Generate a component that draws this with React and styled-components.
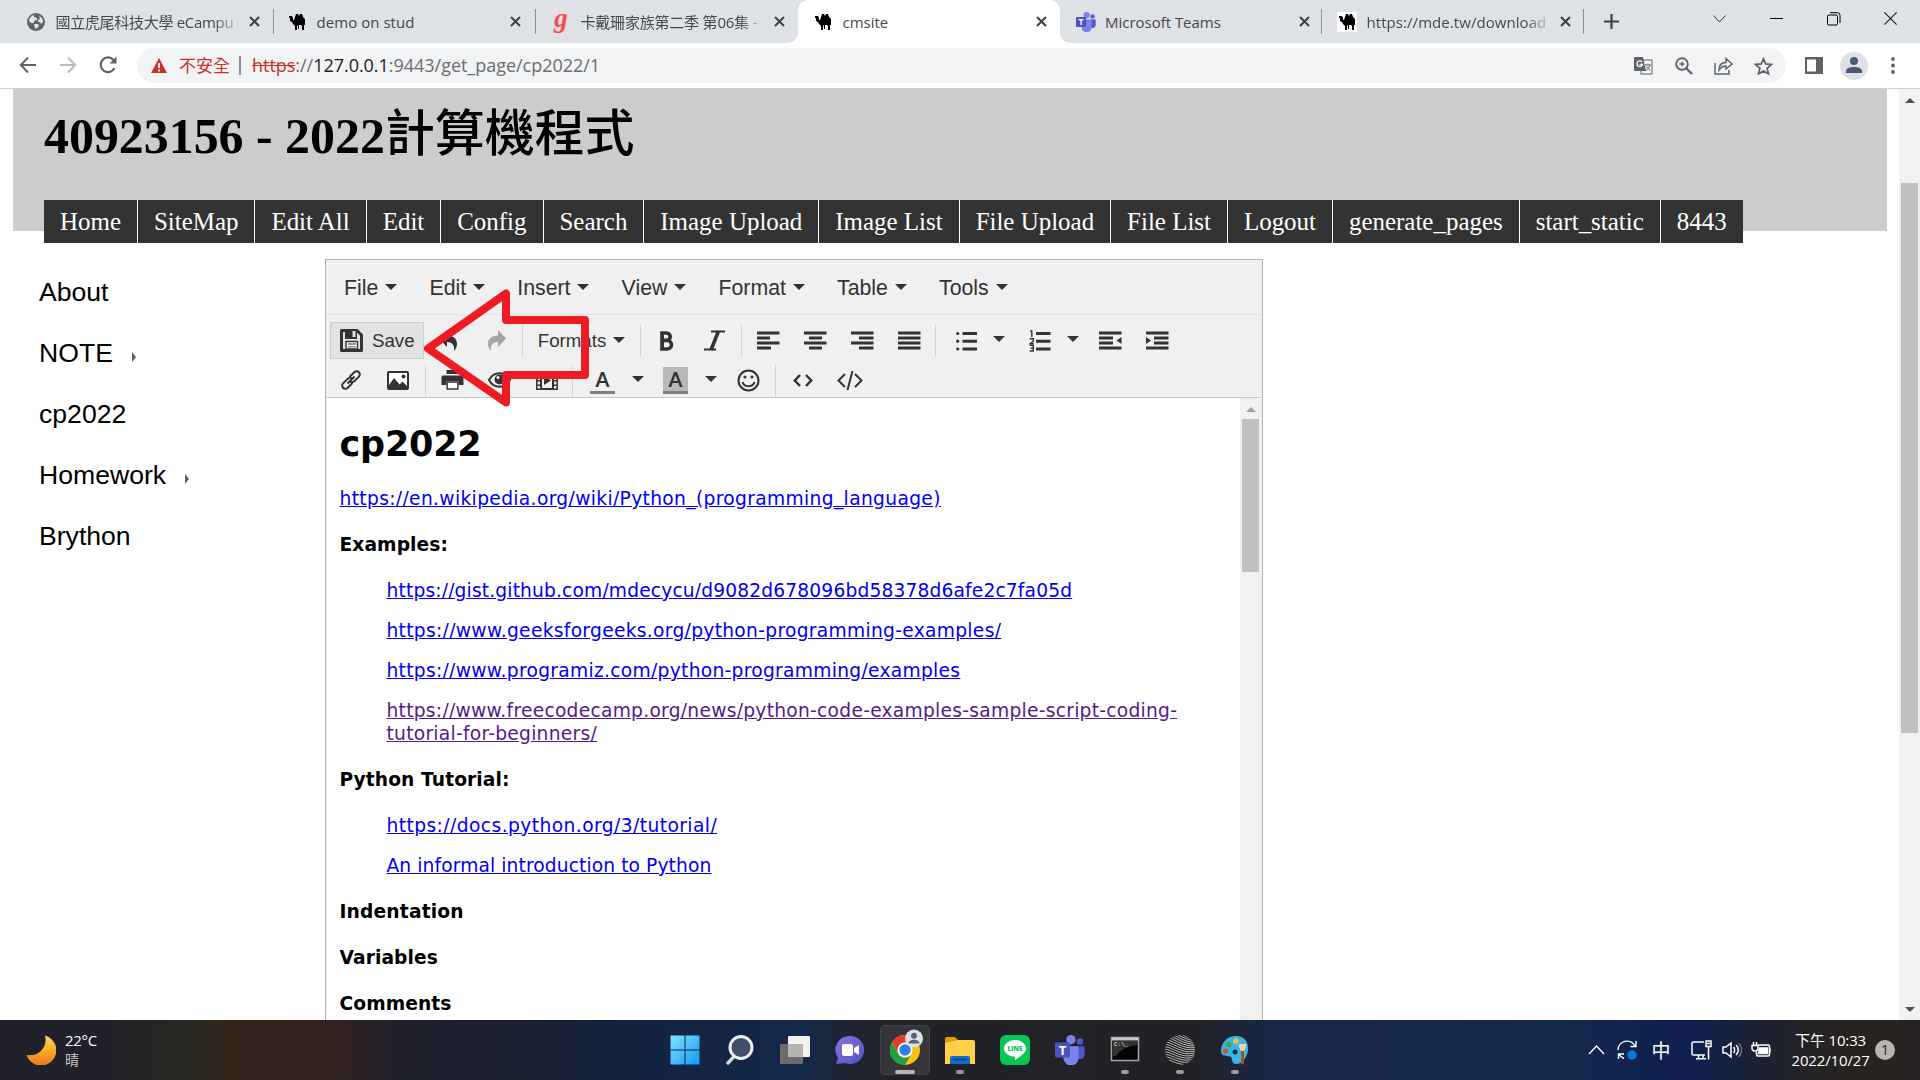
import React from "react";
import styled, { createGlobalStyle } from "styled-components";

const GlobalStyle = createGlobalStyle`
  * { box-sizing: border-box; }
  body { margin: 0; background: #fff; overflow: hidden; }
  svg { display: block; flex: none; }
`;

const UI = `"Open Sans", "Noto Sans", "Noto Sans CJK TC", sans-serif`;

const Desktop = styled.div`
  width: 1920px;
  height: 1080px;
  display: flex;
  flex-direction: column;
  position: relative;
  overflow: hidden;
  background: #fff;
`;

/* ---------- browser chrome ---------- */

const TabStrip = styled.div`
  height: 43px;
  flex: none;
  background: #dee1e6;
  display: flex;
`;

const Tab = styled.div`
  width: ${(p) => p.$width || 262}px;
  height: 43px;
  padding-left: ${(p) => p.$pad ?? 15}px;
  display: flex;
  align-items: center;
  position: relative;
  background: ${(p) => (p.$active ? "#fff" : "transparent")};
  border-radius: 10px 10px 0 0;
`;

const TabCorner = styled.span`
  position: absolute;
  bottom: 0;
  ${(p) => p.$side}: -10px;
  width: 10px;
  height: 10px;
  background: radial-gradient(
    circle at ${(p) => (p.$side === "left" ? "0 0" : "100% 0")},
    transparent 9.5px,
    #fff 10px
  );
`;

const Favicon = styled.span`
  width: 20px;
  height: 20px;
  display: flex;
  align-items: center;
  justify-content: center;
  background: ${(p) => (p.$plate ? "#fff" : "transparent")};
`;

const TabTitle = styled.span`
  width: 184px;
  margin-left: 9.5px;
  padding-top: 1px;
  font: 15px/22px ${UI};
  letter-spacing: ${(p) => p.$track || 0}px;
  color: #45484c;
  white-space: nowrap;
  mask-image: ${(p) => (p.$fade ? "linear-gradient(90deg,#000 158px,rgba(0,0,0,0.15) 182px)" : "none")};
`;

const TabClose = styled.span`
  width: 12px;
  margin-left: 9.5px;
`;

const TabRule = styled.span`
  width: 1px;
  height: 25px;
  margin-left: auto;
  background: #8d9095;
`;

const NewTab = styled.span`
  width: 55px;
  display: flex;
  align-items: center;
  justify-content: center;
`;

const WindowButtons = styled.div`
  margin-left: auto;
  padding-right: 1px;
  display: flex;
`;

const WindowButton = styled.span`
  width: 57px;
  height: 37px;
  display: flex;
  align-items: center;
  justify-content: center;
`;

const AddressRow = styled.div`
  height: 46px;
  flex: none;
  display: flex;
  align-items: center;
  border-bottom: 1px solid #cfcfcf;
  padding-left: 10px;
`;

const NavIcon = styled.span`
  width: ${(p) => p.$width}px;
  display: flex;
  justify-content: center;
  padding-bottom: 1px;
`;

const Omnibox = styled.div`
  width: 1649px;
  height: 35px;
  margin-left: 12px;
  border-radius: 18px;
  background: #f1f3f4;
  display: flex;
  align-items: center;
  padding: 0 2.5px 0 14px;
`;

const Warning = styled.span`
  margin-left: 12px;
  font: 17px/24px ${UI};
  color: #c5342b;
`;

const OmniRule = styled.span`
  width: 2px;
  height: 19px;
  margin: 0 11px 0 9px;
  background: #8b8e92;
`;

const Url = styled.span`
  font: 18px/24px ${UI};
  letter-spacing: -0.03px;
  padding-bottom: 2px;
  color: #6a6e73;
  b { font-weight: 400; color: #202124; }
  s { color: #c5342b; }
`;

const OmniActions = styled.div`
  margin-left: auto;
  display: flex;
`;

const OmniAction = styled.span`
  width: 40px;
  display: flex;
  justify-content: center;
`;

const ChromeActions = styled.div`
  display: flex;
  align-items: center;
  margin-left: 19px;
`;

const Avatar = styled.span`
  width: 28px;
  height: 28px;
  margin: 0 23px 0 17px;
  border-radius: 50%;
  background: #dee1e6;
  display: flex;
  align-items: center;
  justify-content: center;
`;

/* ---------- web page ---------- */

const Viewport = styled.div`
  height: 931px;
  flex: none;
  display: flex;
  overflow: hidden;
`;

const Page = styled.div`
  flex: 1;
  padding: 0 12px 0 13px;
`;

const Header = styled.header`
  height: 142px;
  background: #ccc;
  padding-left: 31px;
`;

const Title = styled.h1`
  margin: 0;
  height: 111px;
  padding-top: 14px;
  font: bold 49.9px/56px "Liberation Serif", "Noto Sans CJK TC", serif;
  color: #000;
  white-space: nowrap;
  span { font-family: "Noto Sans CJK TC", sans-serif; font-weight: 500; position: relative; top: -2px; }
`;

const Menu = styled.nav`
  display: flex;
`;

const MenuItem = styled.a`
  height: 43px;
  padding: 0 15.98px;
  background: #333;
  border-right: 1px solid #fff;
  font: 24.96px/43px "Liberation Serif", serif;
  color: #fff;
  &:last-child { border-right: 0; }
`;

const Body = styled.div`
  display: flex;
`;

const Sidebar = styled.aside`
  width: 312px;
  padding: 30.5px 0 0 26px;
`;

const SideLink = styled.a`
  height: 60.9px;
  display: flex;
  align-items: center;
  font: 26.6px/30px "Liberation Sans", sans-serif;
  color: #000;
`;

const SubMark = styled.i`
  margin: 8px 0 0 19px;
  border-left: 4px solid #606060;
  border-top: 5px solid transparent;
  border-bottom: 5px solid transparent;
`;

const Scrollbar = styled.div`
  width: 21px;
  background: #f1f1f1;
  display: flex;
  flex-direction: column;
  align-items: center;
  flex: none;
`;

const ScrollArrow = styled.i`
  border-left: 5px solid transparent;
  border-right: 5px solid transparent;
  ${(p) => (p.$down ? "border-top" : "border-bottom")}: 5px solid ${(p) => p.$color || "#505050"};
  margin: ${(p) => p.$margin};
`;

const Thumb = styled.div`
  width: 17px;
  height: ${(p) => p.$height}px;
  background: #c1c1c1;
`;

/* ---------- editor ---------- */

const Editor = styled.section`
  width: 938px;
  height: 900px;
  margin-top: 28px;
  border: 1px solid #b5b5b5;
  background: #f0f0f0;
  padding: 0 1px;
`;

const MenuBar = styled.div`
  height: 55px;
  border-bottom: 1px solid #e2e2e2;
  display: flex;
  align-items: center;
  padding: 1px 0 0 17px;
  gap: 32.1px;
`;

const DropLabel = styled.span`
  display: flex;
  align-items: center;
  font: ${(p) => p.$size || 21.3}px/26px "Liberation Sans", sans-serif;
  color: #333;
  gap: 7px;
`;

const Caret = styled.i`
  border-left: 6.5px solid transparent;
  border-right: 6.5px solid transparent;
  border-top: 6.5px solid #333;
  margin-top: ${(p) => p.$top || 0}px;
`;

const ToolRow = styled.div`
  height: ${(p) => p.$height}px;
  padding: ${(p) => p.$padding};
  display: flex;
  align-items: center;
`;

const SaveButton = styled.span`
  width: 94px;
  height: 37px;
  margin-right: 1px;
  border: 1px solid #ccc;
  background: #e2e2e2;
  display: flex;
  align-items: center;
  gap: 9px;
  padding-left: 9px;
  font: 18.7px/22px "Liberation Sans", sans-serif;
  color: #333;
`;

const Tool = styled.span`
  width: ${(p) => p.$width || 47}px;
  margin-left: ${(p) => p.$left || 0}px;
  display: flex;
  justify-content: center;
`;

const Sep = styled.i`
  width: 1px;
  height: 31px;
  margin: 0 ${(p) => p.$after ?? 3}px 0 ${(p) => p.$before ?? 3}px;
  background: #d2d2d2;
`;

const Swatch = styled.span`
  width: 25px;
  height: 27px;
  display: flex;
  align-items: center;
  justify-content: center;
  background: ${(p) => p.$fill || "transparent"};
  border-bottom: 3px solid #808080;
  font: bold 20px/22px Lato, "Open Sans", sans-serif;
  color: #333;
`;

const Frame = styled.div`
  border-top: 1px solid #c8c8c8;
  height: 640px;
  display: flex;
  background: #fff;
`;

const Article = styled.article`
  flex: 1;
  padding: 25px 0 0 12.5px;
  font: 18.67px/23px "DejaVu Sans", Verdana, sans-serif;
  color: #000;
`;

const DocTitle = styled.h1`
  margin: 0 0 22px;
  font-size: 35px;
  line-height: 42px;
  letter-spacing: -0.2px;
`;

const Para = styled.p`
  margin: 0 0 ${(p) => p.$gap ?? 23}px;
  padding-left: ${(p) => (p.$indent ? 47 : 0)}px;
  white-space: nowrap;
  letter-spacing: ${(p) => p.$track ?? 0.08}px;
`;

const Link = styled.a`
  color: ${(p) => (p.$visited ? "#551a8b" : "#0000ee")};
  text-decoration: underline;
`;

const RedArrow = styled.svg`
  position: absolute;
  left: 415px;
  top: 280px;
`;

/* ---------- taskbar ---------- */

const Taskbar = styled.footer`
  height: 60px;
  flex: none;
  display: flex;
  background: linear-gradient(
    90deg,
    #20212b 0,
    #20212a 100px,
    #252722 170px,
    #30231a 235px,
    #30221f 340px,
    #20212c 400px,
    #1a2030 520px,
    #142342 650px,
    #14284b 800px,
    #20242f 850px,
    #212227 900px,
    #222226 1200px,
    #16264a 1280px,
    #14284b 1560px,
    #101f50 1690px,
    #1e222e 1770px,
    #29231f 1850px,
    #272322 1920px
  );
  color: #fff;
  font: 15px/20px ${UI};
`;

const Weather = styled.div`
  width: 657.5px;
  display: flex;
  align-items: center;
  padding-left: 26px;
  gap: 9px;
`;

const Stack = styled.div`
  width: ${(p) => (p.$width ? `${p.$width}px` : "auto")};
  display: flex;
  flex-direction: column;
  text-align: ${(p) => p.$align || "left"};
  letter-spacing: ${(p) => p.$track || 0}px;
  white-space: nowrap;
`;

const Dim = styled.span`
  color: #c4c4c6;
  font-size: 14px;
`;

const Apps = styled.div`
  display: flex;
`;

const AppSlot = styled.span`
  width: 55px;
  height: 60px;
  padding: 5px 2.5px;
  display: flex;
`;

const AppTile = styled.span`
  width: 50px;
  height: 50px;
  display: flex;
  flex-direction: column;
  align-items: center;
  padding-top: 9px;
  border-radius: 5px;
  background: ${(p) => (p.$active ? "rgba(255,255,255,0.09)" : "transparent")};
  border: 1px solid ${(p) => (p.$active ? "rgba(255,255,255,0.07)" : "transparent")};
`;

const Indicator = styled.i`
  width: ${(p) => (p.$active ? 20 : 8)}px;
  height: 4px;
  margin-top: 5px;
  border-radius: 2px;
  background: ${(p) => (p.$active ? "#bdb6b4" : "#9a9a9e")};
`;

const ChromeMark = styled.svg`
  margin: -6px 0 -1px;
`;

const Tray = styled.div`
  margin-left: auto;
  display: flex;
  align-items: center;
  padding-right: 25px;
`;

const TrayCell = styled.span`
  width: ${(p) => p.$width}px;
  display: flex;
  justify-content: center;
  font: 19px/24px "Noto Sans CJK TC", sans-serif;
`;

const Badge = styled.span`
  width: 20px;
  height: 20px;
  margin-left: 9px;
  border-radius: 50%;
  background: #bab5b2;
  color: #1d1d1d;
  font: 14px/20px ${UI};
  text-align: center;
`;

/* ---------- drawings ---------- */

const Camel = () => (
  <svg width="18" height="17" viewBox="0 0 18 17">
    <path
      fill="#000"
      d="M1 3h3l1 2v2h1l1-3 1-3h2l1 2 1-2h2l1 3 2 2v4l-1 2v5h-2v-4l-1-1h-3l-1 1v5H7v-5L5 11l-1-2-2-1V5H1zM10 12h1v4h-1zM16 8h1v4h-1z"
    />
  </svg>
);

const Globe = () => (
  <svg width="18" height="18" viewBox="0 0 18 18">
    <circle cx="9" cy="9" r="9" fill="#5f6368" />
    <path fill="#dee1e6" d="M2 8c0-3 2-5 5-6v2l3 1v2L7 8v2H4zM12 3c3 1 4 3 4 6l-2 2-1-2h-2V7l2-1zM7 11h4l1 2-3 3-1-1z" />
  </svg>
);

const TeamsLogo = ({ size = 20 }) => (
  <svg width={size} height={size} viewBox="0 0 32 32">
    <circle cx="17" cy="5" r="5" fill="#7b83eb" />
    <circle cx="26.5" cy="7" r="3.5" fill="#5059c9" />
    <path fill="#5059c9" d="M22 12h9.5v9a5 5 0 0 1-9.5 2z" />
    <path fill="#7b83eb" d="M9 12h16v12a8 8 0 0 1-16 1z" />
    <rect y="8" width="16" height="16" rx="1.5" fill="#4b53bc" />
    <text x="8" y="21" fill="#fff" fontFamily="Open Sans, sans-serif" fontWeight="700" fontSize="14" textAnchor="middle">T</text>
  </svg>
);

const GLetter = styled.span`
  font: italic bold 27px/18px "Liberation Serif", serif;
  color: #fa4b4b;
  padding-bottom: 8px;
`;

const CloseX = ({ size = 11, stroke = "#3c4043", w = 2 }) => (
  <svg width={size} height={size} viewBox="0 0 11 11">
    <path d="M1 1l9 9M10 1l-9 9" stroke={stroke} strokeWidth={w} fill="none" />
  </svg>
);

const Arrow = ({ flip, color }) => (
  <svg width="18" height="18" viewBox="0 0 18 18" transform={flip ? "scale(-1 1)" : undefined}>
    <path d="M17 9H2M9 1.5L1.8 9 9 16.5" stroke={color} strokeWidth="2" fill="none" />
  </svg>
);

const Lines = ({ rows, children }) => (
  <svg width="23" height="19" viewBox="0 0 23 19">
    {rows.map(([x, w], i) => (
      <rect key={i} x={x} y={i * 5 + 0.5} width={w} height="3" fill="#333" />
    ))}
    {children}
  </svg>
);

const full = [0, 22.5];

const curl = "M8 0v5.500c6 0 10 3 10 8.500 0 3-1.500 5.500-3 7 .8-5-1-9-7-9v5L0 8.500z";

const Icon = {
  save: (
    <svg width="23" height="23" viewBox="0 0 23 23">
      <path d="M1.500 1.500h15.500l4.500 4.500v15.500h-20z" fill="none" stroke="#333" strokeWidth="3" strokeLinejoin="round" />
      <path d="M5 0h12v10H5z" fill="#333" />
      <path d="M12.500 2h3v6h-3z" fill="#e2e2e2" />
      <path d="M6 12.500h11.500V20H6z" fill="#fff" stroke="#333" strokeWidth="1.400" />
      <path d="M8 15h8M8 17.800h8" stroke="#777" strokeWidth="1.300" />
    </svg>
  ),
  undo: (
    <svg width="20" height="22" viewBox="0 0 20 22"><path fill="#333" d={curl} /></svg>
  ),
  redo: (
    <svg width="20" height="22" viewBox="0 0 20 22"><path fill="#a5a5a5" transform="translate(20 0) scale(-1 1)" d={curl} /></svg>
  ),
  italic: (
    <svg width="23" height="21" viewBox="0 0 23 21">
      <path d="M8 1.500h14M1 19.500h12" stroke="#333" strokeWidth="2" />
      <path d="M15.500 1L8 20" stroke="#333" strokeWidth="3.600" />
    </svg>
  ),
  bold: (
    <svg width="14" height="20" viewBox="0 0 14 20">
      <path fill="none" stroke="#333" strokeWidth="3.600" d="M2 2h4.500a3.600 3.600 0 0 1 0 7.400H2h5.200a4.300 4.300 0 0 1 0 8.600H2zM2.200 1v18" />
    </svg>
  ),
  link: (
    <svg width="22" height="22" viewBox="0 0 22 22" fill="none" stroke="#333" strokeWidth="2">
      <path d="M9.500 8l5-5a3 3 0 0 1 2-.8c2 0 3.500 1.500 3.300 3.500 0 .8-.4 1.400-.9 1.900l-4.500 4.500c-1.300 1.300-3.400 1.200-4.600 0M12.500 14l-5 5a3 3 0 0 1-2 .8c-2 0-3.500-1.500-3.300-3.500 0-.8.4-1.400.9-1.900l4.500-4.500c1.300-1.300 3.400-1.200 4.600 0M7.500 14.500l7-7" />
    </svg>
  ),
  image: (
    <svg width="22" height="19" viewBox="0 0 22 19">
      <rect x="1" y="1" width="20" height="17" rx="1" fill="#fff" stroke="#333" strokeWidth="2" />
      <path fill="#333" d="M2 17V14l5-7 5.500 6.500 3-3L20 15v2z" />
      <circle cx="16.500" cy="5.500" r="2" fill="#333" />
    </svg>
  ),
  print: (
    <svg width="23" height="20" viewBox="0 0 23 20">
      <path fill="#333" d="M5.500 0h12v4h-12zM1.500 5.500h20l1 1V15h-5v-4h-12v4H.5V6.500z" />
      <path d="M6.200 12h10.600v7H6.200z" fill="#fff" stroke="#333" strokeWidth="1.400" />
    </svg>
  ),
  eye: (
    <svg width="23" height="18" viewBox="0 0 23 18">
      <path d="M1 9c5-9 16-9 21 0-5 9-16 9-21 0z" fill="#fff" stroke="#333" strokeWidth="2" />
      <circle cx="11.500" cy="8.500" r="5" fill="#333" />
      <circle cx="10" cy="6.500" r="1.500" fill="#fff" />
    </svg>
  ),
  media: (
    <svg width="22" height="19" viewBox="0 0 22 19">
      <path fill="#333" d="M0 0h22v19H0z" />
      <path fill="#f0f0f0" d="M6 2h10v15H6zM1.500 2H4v2.500H1.500zM1.500 6H4v3H1.500zM1.500 10.500H4v3H1.500zM1.500 15H4v2.500H1.500zM18 2h2.500v2.500H18zM18 6h2.500v3H18zM18 10.500h2.500v3H18zM18 15h2.500v2.500H18z" />
      <path fill="#333" d="M8 5l7 4.500L8 14z" />
    </svg>
  ),
  smile: (
    <svg width="23" height="23" viewBox="0 0 23 23" fill="none" stroke="#333" strokeWidth="2">
      <circle cx="11.500" cy="11.500" r="10" />
      <path d="M5.500 13c1.500 5.500 10.500 5.500 12 0" />
      <circle cx="8" cy="8" r=".9" fill="#333" strokeWidth="1.300" />
      <circle cx="15" cy="8" r=".9" fill="#333" strokeWidth="1.300" />
    </svg>
  ),
  code: (
    <svg width="20" height="13" viewBox="0 0 20 13" fill="none" stroke="#333" strokeWidth="2.500">
      <path d="M7 1L1.800 6.500 7 12M13 1l5.200 5.500L13 12" />
    </svg>
  ),
  source: (
    <svg width="26" height="19" viewBox="0 0 26 19" fill="none" stroke="#333" strokeWidth="2">
      <path d="M8 3L1.500 9.500 8 16M18 3l6.500 6.500L18 16M15.500 0l-5 19" />
    </svg>
  ),
  bullets: (
    <svg width="21" height="20" viewBox="0 0 21 20" fill="#333">
      <path d="M6.500 1H21v3H6.500zM6.500 8.700H21v3H6.500zM6.500 16.500H21v3H6.500z" />
      <circle cx="1.700" cy="2.500" r="1.600" />
      <circle cx="1.700" cy="10.200" r="1.600" />
      <circle cx="1.700" cy="18" r="1.600" />
    </svg>
  ),
  numbers: (
    <svg width="22" height="22" viewBox="0 0 22 22" fill="#333">
      <path d="M7 2H21.500v3H7zM7 9.700H21.500v3H7zM7 17.500H21.500v3H7z" />
      <path d="M1 1h1.800v6M.7 8.700h3.600v2.500L1.200 13.700h3.600M.7 15.400h3.600v2.800H1.500M4.300 18v3H.7" fill="none" stroke="#333" strokeWidth="1.400" />
    </svg>
  ),
};

const appIcons = [
  <svg width="30" height="30" viewBox="0 0 30 30" key="start">
    <defs><linearGradient id="win" x2="1" y2="1"><stop stopColor="#7fe3ff" /><stop offset="1" stopColor="#1597f5" /></linearGradient></defs>
    <path fill="url(#win)" d="M.5.500h14v14H.500zM15.500.500h14v14h-14zM.5 15.500h14v14H.500zM15.500 15.500h14v14h-14z" />
  </svg>,
  <svg width="30" height="30" viewBox="0 0 30 30" key="search">
    <path d="M10 20.500L3 28" stroke="#d8d8d8" strokeWidth="3.400" strokeLinecap="round" />
    <circle cx="16" cy="12.500" r="11" fill="#3d4f69" stroke="#eee" strokeWidth="3" />
  </svg>,
  <svg width="32" height="30" viewBox="0 0 32 30" key="tasks">
    <rect x="1" y="9" width="23" height="20" rx="1" fill="#6c6c6c" />
    <rect x="9" y="1" width="22" height="21" rx="1" fill="#f2f2f2" />
    <rect x="9" y="9" width="15" height="13" fill="#b5b5b5" />
  </svg>,
  <svg width="30" height="30" viewBox="0 0 30 30" key="chat">
    <defs><linearGradient id="chat" x2="1" y2="1"><stop stopColor="#8a78d8" /><stop offset="1" stopColor="#4c4fc4" /></linearGradient></defs>
    <path fill="url(#chat)" d="M15 1a14 14 0 1 1-5 27L1 29l2-6A14 14 0 0 1 15 1z" />
    <rect x="7" y="9" width="11" height="12" rx="2" fill="#fff" />
    <path fill="#fff" d="M19 13l5-3v10l-5-3z" />
  </svg>,
  <ChromeMark width="36" height="37" viewBox="0 0 36 37" key="chrome">
    <circle cx="18" cy="21" r="15" fill="#fbc116" />
    <path fill="#e33b2e" d="M5 13.500a15 15 0 0 1 26 0H18L11.500 25z" />
    <path fill="#23a047" d="M5 13.500L11.500 25a7.500 7.500 0 0 0 13 0L18 36A15 15 0 0 1 5 13.500z" />
    <circle cx="18" cy="21" r="7.500" fill="#fff" />
    <circle cx="18" cy="21" r="5.700" fill="#2f7de9" />
    <circle cx="27" cy="9.500" r="9" fill="#dfe2e7" />
    <circle cx="27" cy="6.700" r="3" fill="#56637a" />
    <path d="M21.500 14.500c0-5 11-5 11 0z" fill="#56637a" />
  </ChromeMark>,
  <svg width="30" height="30" viewBox="0 0 30 30" key="files">
    <path fill="#e09c00" d="M0 4a2 2 0 0 1 2-2h8l3 3v4H0z" />
    <path fill="#ffcf48" d="M0 8l13-3h15a2 2 0 0 1 2 2v22H0z" />
    <path fill="#0f6fc6" d="M5 29v-6a2 2 0 0 1 2-2h16a2 2 0 0 1 2 2v6z" />
    <path stroke="#063f7d" strokeWidth="1.500" d="M8 24.500h14" />
  </svg>,
  <svg width="30" height="30" viewBox="0 0 30 30" key="line">
    <rect width="30" height="30" rx="6" fill="#06c755" />
    <path fill="#fff" d="M15 5c6 0 11 3.700 11 8.500 0 4-4 7-11 11.500v-3.300C9 21.500 4 18 4 13.500S9 5 15 5z" />
    <text x="15" y="16" fill="#06c755" fontFamily="Open Sans, sans-serif" fontWeight="800" fontSize="6.500" textAnchor="middle">LINE</text>
  </svg>,
  <TeamsLogo size={30} key="teams" />,
  <svg width="30" height="30" viewBox="0 0 30 30" key="cmd">
    <rect x="1.500" y="2.500" width="27" height="23" fill="#050505" stroke="#a8a8a8" strokeWidth="1.500" />
    <path fill="#c9c9c9" d="M2 3h26v2.500H2z" />
    <path fill="#333" d="M3 6h24v4C16 11 9 16 6 21H3z" />
    <text x="4" y="11" fill="#fff" fontFamily="Liberation Mono, monospace" fontSize="6">C:\_</text>
  </svg>,
  <svg width="30" height="30" viewBox="0 0 30 30" key="sphere">
    <clipPath id="ball"><circle cx="15" cy="15" r="15" /></clipPath>
    <g clipPath="url(#ball)">
      <rect width="30" height="30" fill="#1b1b1b" />
      {[...Array(16)].map((_, i) => (
        <path key={i} d={`M-2 ${i * 2.5 - 8}C6 ${i * 2.5 - 10} 18 ${i * 2.5 + 4} 32 ${i * 1.6 + 4}`} fill="none" stroke="#c4c4c4" strokeWidth="1" />
      ))}
    </g>
  </svg>,
  <svg width="30" height="30" viewBox="0 0 30 30" key="paint">
    <path fill="#39b3ea" d="M16 1c8 0 13 6 12 14s-6 14-12 14c-5 0-3-5-5-7s-10 1-10-6C1 7 8 1 16 1z" />
    <circle cx="16" cy="6" r="2.800" fill="#f9c22c" />
    <circle cx="8.500" cy="9.500" r="2.600" fill="#4fa52e" />
    <circle cx="5.500" cy="16" r="2.500" fill="#dc4a26" />
    <circle cx="15" cy="17" r="2.500" fill="#16324a" />
    <path d="M22.500 15v13" stroke="#a4550c" strokeWidth="3" strokeLinecap="round" />
    <path fill="#f2d3a4" d="M19 9h7v3l-2 4h-3l-2-4z" />
  </svg>,
];

const tabs = [
  { icon: <Globe />, title: "國立虎尾科技大學 eCampu", fade: true, rule: true, pad: 26, width: 274, track: -0.3 },
  { icon: <Camel />, title: "demo on stud", rule: true, pad: 13, track: 0.05 },
  { icon: <GLetter>g</GLetter>, title: "卡戴珊家族第二季 第06集 -", fade: true, track: -0.2 },
  { icon: <Camel />, title: "cmsite", active: true },
  { icon: <TeamsLogo />, title: "Microsoft Teams", rule: true, pad: 15.5, track: -0.02 },
  { icon: <Camel />, title: "https://mde.tw/download", fade: true, rule: true, plate: true, track: 0.06 },
];

const menu = ["Home", "SiteMap", "Edit All", "Edit", "Config", "Search", "Image Upload", "Image List", "File Upload", "File List", "Logout", "generate_pages", "start_static", "8443"];

const sideLinks = [["About"], ["NOTE", true], ["cp2022"], ["Homework", true], ["Brython"]];

const editorMenus = ["File", "Edit", "Insert", "View", "Format", "Table", "Tools"];

function BrowserTabs() {
  return (
    <TabStrip>
      {tabs.map((t) => (
        <Tab key={t.title} $active={t.active} $pad={t.pad} $width={t.width}>
          {t.active && <TabCorner $side="left" />}
          {t.active && <TabCorner $side="right" />}
          <Favicon $plate={t.plate}>{t.icon}</Favicon>
          <TabTitle $fade={t.fade} $track={t.track}>{t.title}</TabTitle>
          <TabClose><CloseX /></TabClose>
          {t.rule && <TabRule />}
        </Tab>
      ))}
      <NewTab>
        <svg width="15" height="15" viewBox="0 0 15 15"><path d="M7.500 0v15M0 7.500h15" stroke="#3c4043" strokeWidth="2.200" /></svg>
      </NewTab>
      <WindowButtons>
        <WindowButton><svg width="13" height="8" viewBox="0 0 13 8"><path d="M.5.500l6 6.500 6-6.500" fill="none" stroke="#333" /></svg></WindowButton>
        <WindowButton><svg width="13" height="2" viewBox="0 0 13 2"><path d="M0 .5h13" stroke="#000" /></svg></WindowButton>
        <WindowButton>
          <svg width="14" height="14" viewBox="0 0 14 14" fill="none" stroke="#000"><rect x=".5" y="3" width="10" height="10" rx="1.500" /><path d="M3 .7h7.500a2.500 2.500 0 0 1 2.500 2.500V11" /></svg>
        </WindowButton>
        <WindowButton><CloseX size={15} stroke="#222" w={0.9} /></WindowButton>
      </WindowButtons>
    </TabStrip>
  );
}

function AddressBar() {
  return (
    <AddressRow>
      <NavIcon $width={35}><Arrow color="#5f6368" /></NavIcon>
      <NavIcon $width={45}><Arrow color="#b9bbbe" flip /></NavIcon>
      <NavIcon $width={35}>
        <svg width="18" height="18" viewBox="0 0 18 18"><path d="M15.500 12A7.300 7.300 0 1 1 14.500 4" fill="none" stroke="#5f6368" strokeWidth="2.200" /><path d="M17.500.5v7h-7z" fill="#5f6368" /></svg>
      </NavIcon>
      <Omnibox>
        <svg width="16" height="15" viewBox="0 0 16 15"><path d="M8 0l8 15H0z" fill="#c5342b" /><path d="M8 5v5M8 11.500v2" stroke="#fff" strokeWidth="1.700" /></svg>
        <Warning>不安全</Warning>
        <OmniRule />
        <Url><s>https</s>://<b>127.0.0.1</b>:9443/get_page/cp2022/1</Url>
        <OmniActions>
          <OmniAction>
            <svg width="19" height="18" viewBox="0 0 19 18"><rect x="7" y="3" width="11" height="14" fill="#f1f3f4" stroke="#5f6368" /><path d="M1 0h8l3 14H1a1 1 0 0 1-1-1V1a1 1 0 0 1 1-1z" fill="#5f6368" /><path d="M8 5a2.800 2.800 0 1 0 .5 2.500H5.500" fill="none" stroke="#fff" strokeWidth="1.300" /><path d="M11 8h6M14 6.500V8M16 8c-1 3-2 4-4 5.500M12.500 9.500l3.500 4" stroke="#5f6368" fill="none" /></svg>
          </OmniAction>
          <OmniAction>
            <svg width="18" height="18" viewBox="0 0 18 18" fill="none" stroke="#5f6368"><circle cx="7" cy="7" r="5.800" strokeWidth="1.900" /><path d="M11 11l6 6" strokeWidth="2.400" /><path d="M7 4.500v5M4.500 7h5" strokeWidth="1.400" /></svg>
          </OmniAction>
          <OmniAction>
            <svg width="19" height="18" viewBox="0 0 19 18" fill="none" stroke="#5f6368" strokeWidth="1.500"><path d="M1 6v11h14v-4" /><path d="M5 13c0-5 2.500-7.500 7-7.500v-4L18 7l-6 5V9c-3 0-5 1-7 4z" /></svg>
          </OmniAction>
          <OmniAction>
            <svg width="19" height="18" viewBox="0 0 20 19" fill="none" stroke="#5f6368" strokeWidth="1.900"><path d="M10 2l2.400 5.400 5.900.6-4.400 4 1.300 5.800L10 14.800l-5.200 3L6.100 12 1.700 8l5.900-.6z" /></svg>
          </OmniAction>
        </OmniActions>
      </Omnibox>
      <ChromeActions>
        <svg width="18" height="17" viewBox="0 0 18 17"><path d="M0 0h18v17H0z" fill="#5f6368" /><path d="M2 2.500h9v12H2z" fill="#fff" /></svg>
        <Avatar>
          <svg width="16" height="17" viewBox="0 0 16 17" fill="#4a5a76"><circle cx="8" cy="4" r="4" /><path d="M0 16v-2c0-5.500 16-5.500 16 0v2z" /></svg>
        </Avatar>
        <svg width="4" height="17" viewBox="0 0 4 17" fill="#5f6368"><circle cx="2" cy="2" r="1.900" /><circle cx="2" cy="8.500" r="1.900" /><circle cx="2" cy="15" r="1.900" /></svg>
      </ChromeActions>
    </AddressRow>
  );
}

function EditorPanel() {
  return (
    <Editor>
      <MenuBar>
        {editorMenus.map((m) => (
          <DropLabel key={m}>{m}<Caret $top={-1} /></DropLabel>
        ))}
      </MenuBar>
      <ToolRow $height={46} $padding="5px 0 0 3px">
        <SaveButton>{Icon.save}Save</SaveButton>
        <Tool>{Icon.undo}</Tool>
        <Tool>{Icon.redo}</Tool>
        <Sep />
        <Tool $width={110} $left={0.5}><DropLabel $size={18.7}>Formats<Caret $top={-1} /></DropLabel></Tool>
        <Sep />
        <Tool>{Icon.bold}</Tool>
        <Tool>{Icon.italic}</Tool>
        <Sep $after={3.5} />
        <Tool><Lines rows={[full, [0, 13], full, [0, 14]]} /></Tool>
        <Tool><Lines rows={[full, [5, 13], full, [5, 13]]} /></Tool>
        <Tool><Lines rows={[full, [8, 14.5], full, [8, 14.5]]} /></Tool>
        <Tool><Lines rows={[full, full, full, full]} /></Tool>
        <Sep $before={2} />
        <Tool $left={4}>{Icon.bullets}</Tool>
        <Tool $width={18}><Caret $top={-3} /></Tool>
        <Tool $left={8}>{Icon.numbers}</Tool>
        <Tool $width={18} $left={1}><Caret $top={-3} /></Tool>
        <Tool $left={5}><Lines rows={[full, [0, 14], [0, 14], full]}><path d="M22.500 6v7l-5-3.500z" fill="#333" /></Lines></Tool>
        <Tool><Lines rows={[full, [8, 14.5], [8, 14.5], full]}><path d="M0 6v7l5-3.500z" fill="#333" /></Lines></Tool>
      </ToolRow>
      <ToolRow $height={36} $padding="2px 0 0 0.5px">
        <Tool>{Icon.link}</Tool>
        <Tool>{Icon.image}</Tool>
        <Sep $after={3.5} />
        <Tool>{Icon.print}</Tool>
        <Tool>{Icon.eye}</Tool>
        <Tool>{Icon.media}</Tool>
        <Sep $before={2} />
        <Tool $width={53}><Swatch>A</Swatch></Tool>
        <Tool $width={18}><Caret $top={-3} /></Tool>
        <Tool $width={53} $left={2}><Swatch $fill="#b8b8b8">A</Swatch></Tool>
        <Tool $width={18}><Caret $top={-3} /></Tool>
        <Tool $left={5}>{Icon.smile}</Tool>
        <Sep />
        <Tool>{Icon.code}</Tool>
        <Tool>{Icon.source}</Tool>
      </ToolRow>
      <Frame>
        <Article>
          <DocTitle>cp2022</DocTitle>
          <Para $track={0.34}><Link>https://en.wikipedia.org/wiki/Python_(programming_language)</Link></Para>
          <Para><b>Examples:</b></Para>
          <Para $indent $gap={17} $track={0.15}><Link>https://gist.github.com/mdecycu/d9082d678096bd58378d6afe2c7fa05d</Link></Para>
          <Para $indent $gap={17} $track={0.3}><Link>https://www.geeksforgeeks.org/python-programming-examples/</Link></Para>
          <Para $indent $gap={17} $track={0.29}><Link>https://www.programiz.com/python-programming/examples</Link></Para>
          <Para $indent $track={0.265}><Link $visited>https://www.freecodecamp.org/news/python-code-examples-sample-script-coding-<br />tutorial-for-beginners/</Link></Para>
          <Para><b>Python Tutorial:</b></Para>
          <Para $indent $gap={17} $track={0.42}><Link>https://docs.python.org/3/tutorial/</Link></Para>
          <Para $indent $track={0.1}><Link>An informal introduction to Python</Link></Para>
          <Para $track={0.16}><b>Indentation</b></Para>
          <Para><b>Variables</b></Para>
          <Para><b>Comments</b></Para>
        </Article>
        <Scrollbar>
          <ScrollArrow $color="#a3a3a3" $margin="9px 0 7px" />
          <Thumb $height={153} />
        </Scrollbar>
      </Frame>
    </Editor>
  );
}

function SystemTaskbar() {
  const running = [4, 5, 8, 9, 10];
  return (
    <Taskbar>
      <Weather>
        <svg width="30" height="30" viewBox="0 0 30 30">
          <defs><linearGradient id="moon" x2="0" y2="1"><stop stopColor="#ffd079" /><stop offset=".4" stopColor="#f9b52d" /><stop offset="1" stopColor="#f0761a" /></linearGradient></defs>
          <path fill="url(#moon)" d="M19 .5A15.300 15.300 0 1 1 .5 20C13 22 22 12 19 .5z" />
        </svg>
        <Stack $track={-0.3}><span>22°C</span><Dim>晴</Dim></Stack>
      </Weather>
      <Apps>
        {appIcons.map((icon, i) => (
          <AppSlot key={i}>
            <AppTile $active={i === 4}>
              {icon}
              {running.includes(i) && <Indicator $active={i === 4} />}
            </AppTile>
          </AppSlot>
        ))}
      </Apps>
      <Tray>
        <TrayCell $width={30}><svg width="17" height="10" viewBox="0 0 17 10"><path d="M1 9l7.500-8L16 9" fill="none" stroke="#fff" strokeWidth="1.400" /></svg></TrayCell>
        <TrayCell $width={30}>
          <svg width="20" height="20" viewBox="0 0 20 20" fill="none" stroke="#fff" strokeWidth="1.400"><path d="M1 10a9 9 0 0 1 17-4M19 1v5.500h-5.500M7 18.500a9 9 0 0 1-5-4.500M1.500 19v-5H7" /><circle cx="15" cy="15" r="4.700" fill="#0a78d6" stroke="none" /></svg>
        </TrayCell>
        <TrayCell $width={39}>中</TrayCell>
        <TrayCell $width={41}>
          <svg width="21" height="20" viewBox="0 0 21 20" fill="none" stroke="#fff" strokeWidth="1.500"><path d="M13 2H2.500A1.500 1.500 0 0 0 1 3.500v10A1.500 1.500 0 0 0 2.500 15H14M5 18.800h10M7.500 15v3.500M12 15v3.500M17.500 7v12.500M15 1h5v5.500h-5zM16 3.500h3" /></svg>
        </TrayCell>
        <TrayCell $width={20}>
          <svg width="20" height="18" viewBox="0 0 20 18" fill="none" stroke="#fff" strokeWidth="1.500"><path d="M1 6h3l5-4v14l-5-4H1zM11.500 6c1.500 1.500 1.500 4.500 0 6M14 4c3 2.500 3 7.500 0 10" /><path d="M16.500 2c4 4 4 10 0 14" stroke="#6b7181" /></svg>
        </TrayCell>
        <TrayCell $width={40}>
          <svg width="21" height="18" viewBox="0 0 21 18" fill="none" stroke="#fff" strokeWidth="1.500"><path d="M7 4h10a1.500 1.500 0 0 1 1.500 1.500v8A1.500 1.500 0 0 1 17 15H7a1.500 1.500 0 0 1-1.500-1.500V11M19 7.500v4M1 4.500h6V8l-1.500 2h-3L1 8zM2.500 1v3M5.500 1v3" /><path d="M8.500 7h8v5.500h-9z" fill="#fff" /></svg>
        </TrayCell>
        <TrayCell $width={10} />
        <Stack $align="right" $track={-0.15} $width={74.5}><span>下午 10:33</span><span>2022/10/27</span></Stack>
        <Badge>1</Badge>
      </Tray>
    </Taskbar>
  );
}

export default function App() {
  return (
    <Desktop>
      <GlobalStyle />
      <BrowserTabs />
      <AddressBar />
      <Viewport>
        <Page>
          <Header>
            <Title>40923156 - 2022<span>計算機程式</span></Title>
            <Menu>{menu.map((m) => <MenuItem key={m}>{m}</MenuItem>)}</Menu>
          </Header>
          <Body>
            <Sidebar>
              {sideLinks.map(([label, sub]) => (
                <SideLink key={label}>{label}{sub && <SubMark />}</SideLink>
              ))}
            </Sidebar>
            <EditorPanel />
          </Body>
        </Page>
        <Scrollbar>
          <ScrollArrow $margin="9px 0 80px" />
          <Thumb $height={550} />
          <ScrollArrow $down $margin="auto 0 8px" />
        </Scrollbar>
      </Viewport>
      <SystemTaskbar />
      <RedArrow width="185" height="135" viewBox="415 280 185 135">
        <path d="M428 348.500L506 293.500V320H585V375H506V402.500Z" fill="none" stroke="#ed1c24" strokeWidth="8" strokeLinejoin="round" />
      </RedArrow>
    </Desktop>
  );
}
